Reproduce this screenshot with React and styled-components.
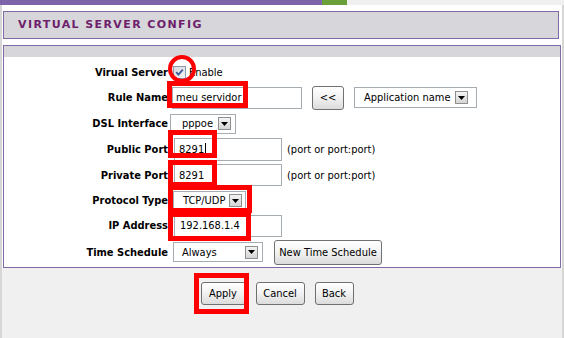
import React from "react";
import styled, { createGlobalStyle } from "styled-components";

const Global = createGlobalStyle`
  html, body { margin: 0; padding: 0; background: #f0f0f0; }
  body {
    font-family: "DejaVu Sans Condensed", "DejaVu Sans", sans-serif;
    font-stretch: condensed;
    font-size: 11px;
    color: #000;
  }
`;

const Page = styled.div`
  position: relative;
  width: 564px;
  height: 338px;
  overflow: hidden;
  background: #f0f0f0;
  display: flex;
  flex-direction: column;
`;

const TopBar = styled.div`
  display: flex;
  height: 5px;
  background: #f0f0f0;
  flex: none;
`;

const BarSeg = styled.div`
  width: ${(p) => p.$w}px;
  background: ${(p) => p.$c};
`;

const Body = styled.div`
  flex: 1;
  display: flex;
  flex-direction: column;
  border-left: 2px solid #d6d6d6;
  border-right: 2px solid #d6d6d6;
  background: #ffffff;
`;

const Header = styled.div`
  margin: 6px 3px 0 1px;
  height: 28px;
  box-sizing: border-box;
  border: 1px solid #7f6aa8;
  background: #d6d6db;
  padding-left: 14px;
  line-height: 26px;
  font-family: "DejaVu Sans", sans-serif;
  font-stretch: normal;
  font-weight: bold;
  font-size: 11px;
  letter-spacing: 1.4px;
  color: #6e1e6b;
`;

const Panel = styled.div`
  margin: 6px 1px 0 1px;
  height: 223px;
  box-sizing: border-box;
  border: 1px solid #7f6aa8;
  background: #fff;
  display: flex;
  flex-direction: column;
`;

const PanelStrip = styled.div`
  height: 11px;
  background: #d6d6db;
`;

const Form = styled.div`
  display: grid;
  grid-template-columns: 164px 1fr;
  grid-template-rows: 26px 25px 27px 25px 26px 25px 25px 28px;
  padding-top: 2px;
`;

const Label = styled.div`
  display: flex;
  align-items: center;
  justify-content: flex-end;
  font-weight: bold;
  white-space: nowrap;
`;

const Cell = styled.div`
  display: flex;
  align-items: center;
  white-space: nowrap;
`;

const TextInput = styled.div`
  box-sizing: border-box;
  display: flex;
  align-items: center;
  margin-left: ${(p) => p.$ml}px;
  width: ${(p) => p.$w}px;
  height: ${(p) => p.$h || 22}px;
  border: 1px solid #a5acb2;
  background: #fff;
  padding-left: ${(p) => p.$pl || 5}px;
`;

const Caret = styled.span`
  display: inline-block;
  width: 1px;
  height: 13px;
  background: #000;
  margin-left: 1px;
`;

const SelectBox = styled.div`
  box-sizing: border-box;
  display: flex;
  align-items: center;
  margin-left: ${(p) => p.$ml}px;
  width: ${(p) => p.$w}px;
  height: ${(p) => p.$h || 20}px;
  border: 1px solid #a5acb2;
  background: #fff;
  padding-left: ${(p) => p.$pl || 9}px;
  padding-right: ${(p) => p.$pr || 4}px;
`;

const SelectText = styled.span`
  flex: 1;
`;

const ArrowBox = styled.span`
  box-sizing: border-box;
  width: 13px;
  height: 13px;
  border: 1px solid #8e8f8f;
  background: linear-gradient(#f4f4f4, #d4d4d4);
  display: flex;
  align-items: center;
  justify-content: center;
`;

const Button = styled.div`
  box-sizing: border-box;
  display: flex;
  align-items: center;
  justify-content: center;
  margin-left: ${(p) => p.$ml || 0}px;
  width: ${(p) => p.$w}px;
  height: ${(p) => p.$h || 23}px;
  border: 1px solid #707070;
  border-radius: 3px;
  background: linear-gradient(#ffffff 0%, #f3f3f3 45%, #dcdcdc 100%);
  color: #000;
`;

const Hint = styled.span`
  margin-left: 5px;
`;

const CheckText = styled.span`
  margin-left: 3px;
`;

const Footer = styled.div`
  flex: 1;
  background: #f0f0f0;
  display: flex;
  justify-content: center;
  align-items: flex-start;
  padding-top: 14px;
  padding-right: 10px;
  gap: 10px;
`;

const Mark = styled.div`
  position: absolute;
  box-sizing: border-box;
  left: ${(p) => p.$x}px;
  top: ${(p) => p.$y}px;
  width: ${(p) => p.$w}px;
  height: ${(p) => p.$h}px;
  border: ${(p) => p.$b || 5}px solid #ff0000;
  border-radius: ${(p) => (p.$round ? "50%" : "0")};
  pointer-events: none;
`;

const CheckIcon = styled.svg`
  margin-left: 5px;
  flex: none;
`;

const Arrow = () => (
  <ArrowBox>
    <svg width="7" height="4" viewBox="0 0 7 4">
      <path d="M0 0 H7 L3.5 4 Z" fill="#000" />
    </svg>
  </ArrowBox>
);

const Select = ({ text, ...rest }) => (
  <SelectBox {...rest}>
    <SelectText>{text}</SelectText>
    <Arrow />
  </SelectBox>
);

export default function App() {
  return (
    <>
      <Global />
      <Page>
        <TopBar>
          <BarSeg $w={322} $c="#7b64a9" />
          <BarSeg $w={25} $c="#6b9f3a" />
        </TopBar>
        <Body>
          <Header>VIRTUAL SERVER CONFIG</Header>
          <Panel>
            <PanelStrip />
            <Form>
              <Label>Virual Server</Label>
              <Cell>
                <CheckIcon width="13" height="13" viewBox="0 0 13 13">
                  <defs>
                    <linearGradient id="cbg" x1="0" y1="0" x2="1" y2="1">
                      <stop offset="0" stopColor="#d5d7dc" />
                      <stop offset="1" stopColor="#f4f4f6" />
                    </linearGradient>
                  </defs>
                  <rect x="0.5" y="0.5" width="12" height="12" fill="url(#cbg)" stroke="#8d99ad" />
                  <path d="M3.2 6.2 L5.4 8.6 L9.8 3.6" fill="none" stroke="#3d5c99" strokeWidth="1.8" />
                </CheckIcon>
                <CheckText>Enable</CheckText>
              </Cell>

              <Label>Rule Name</Label>
              <Cell>
                <TextInput $ml={4} $w={130} $h={22} $pl={3}>meu servidor</TextInput>
                <Button $ml={10} $w={32} $h={24}>&lt;&lt;</Button>
                <Select $ml={10} $w={123} $h={21} $pr={8} text="Application name" />
              </Cell>

              <Label>DSL Interface</Label>
              <Cell>
                <Select $ml={2} $w={66} $h={20} $pl={11} text="pppoe" />
              </Cell>

              <Label>Public Port</Label>
              <Cell>
                <TextInput $ml={6} $w={108} $h={23} $pl={4}>
                  8291<Caret />
                </TextInput>
                <Hint>(port or port:port)</Hint>
              </Cell>

              <Label>Private Port</Label>
              <Cell>
                <TextInput $ml={6} $w={108} $h={22} $pl={4}>8291</TextInput>
                <Hint>(port or port:port)</Hint>
              </Cell>

              <Label>Protocol Type</Label>
              <Cell>
                <Select $ml={5} $w={73} $h={20} $pl={9} $pr={3} text="TCP/UDP" />
              </Cell>

              <Label>IP Address</Label>
              <Cell>
                <TextInput $ml={6} $w={108} $h={22} $pl={5}>192.168.1.4</TextInput>
              </Cell>

              <Label>Time Schedule</Label>
              <Cell>
                <Select $ml={5} $w={90} $h={20} $pl={8} $pr={4} text="Always" />
                <Button $ml={11} $w={108} $h={25}>New Time Schedule</Button>
              </Cell>
            </Form>
          </Panel>
          <Footer>
            <Button $w={45}>Apply</Button>
            <Button $w={49}>Cancel</Button>
            <Button $w={39}>Back</Button>
          </Footer>
        </Body>

        <Mark $round $x={168} $y={55} $w={28} $h={28} $b={4} />
        <Mark $x={167} $y={81} $w={81} $h={27} />
        <Mark $x={168} $y={130} $w={49} $h={28} />
        <Mark $x={168} $y={160} $w={49} $h={27} />
        <Mark $x={168} $y={185} $w={84} $h={28} />
        <Mark $x={168} $y={212} $w={83} $h={29} />
        <Mark $x={194} $y={273} $w={55} $h={41} />
      </Page>
    </>
  );
}
